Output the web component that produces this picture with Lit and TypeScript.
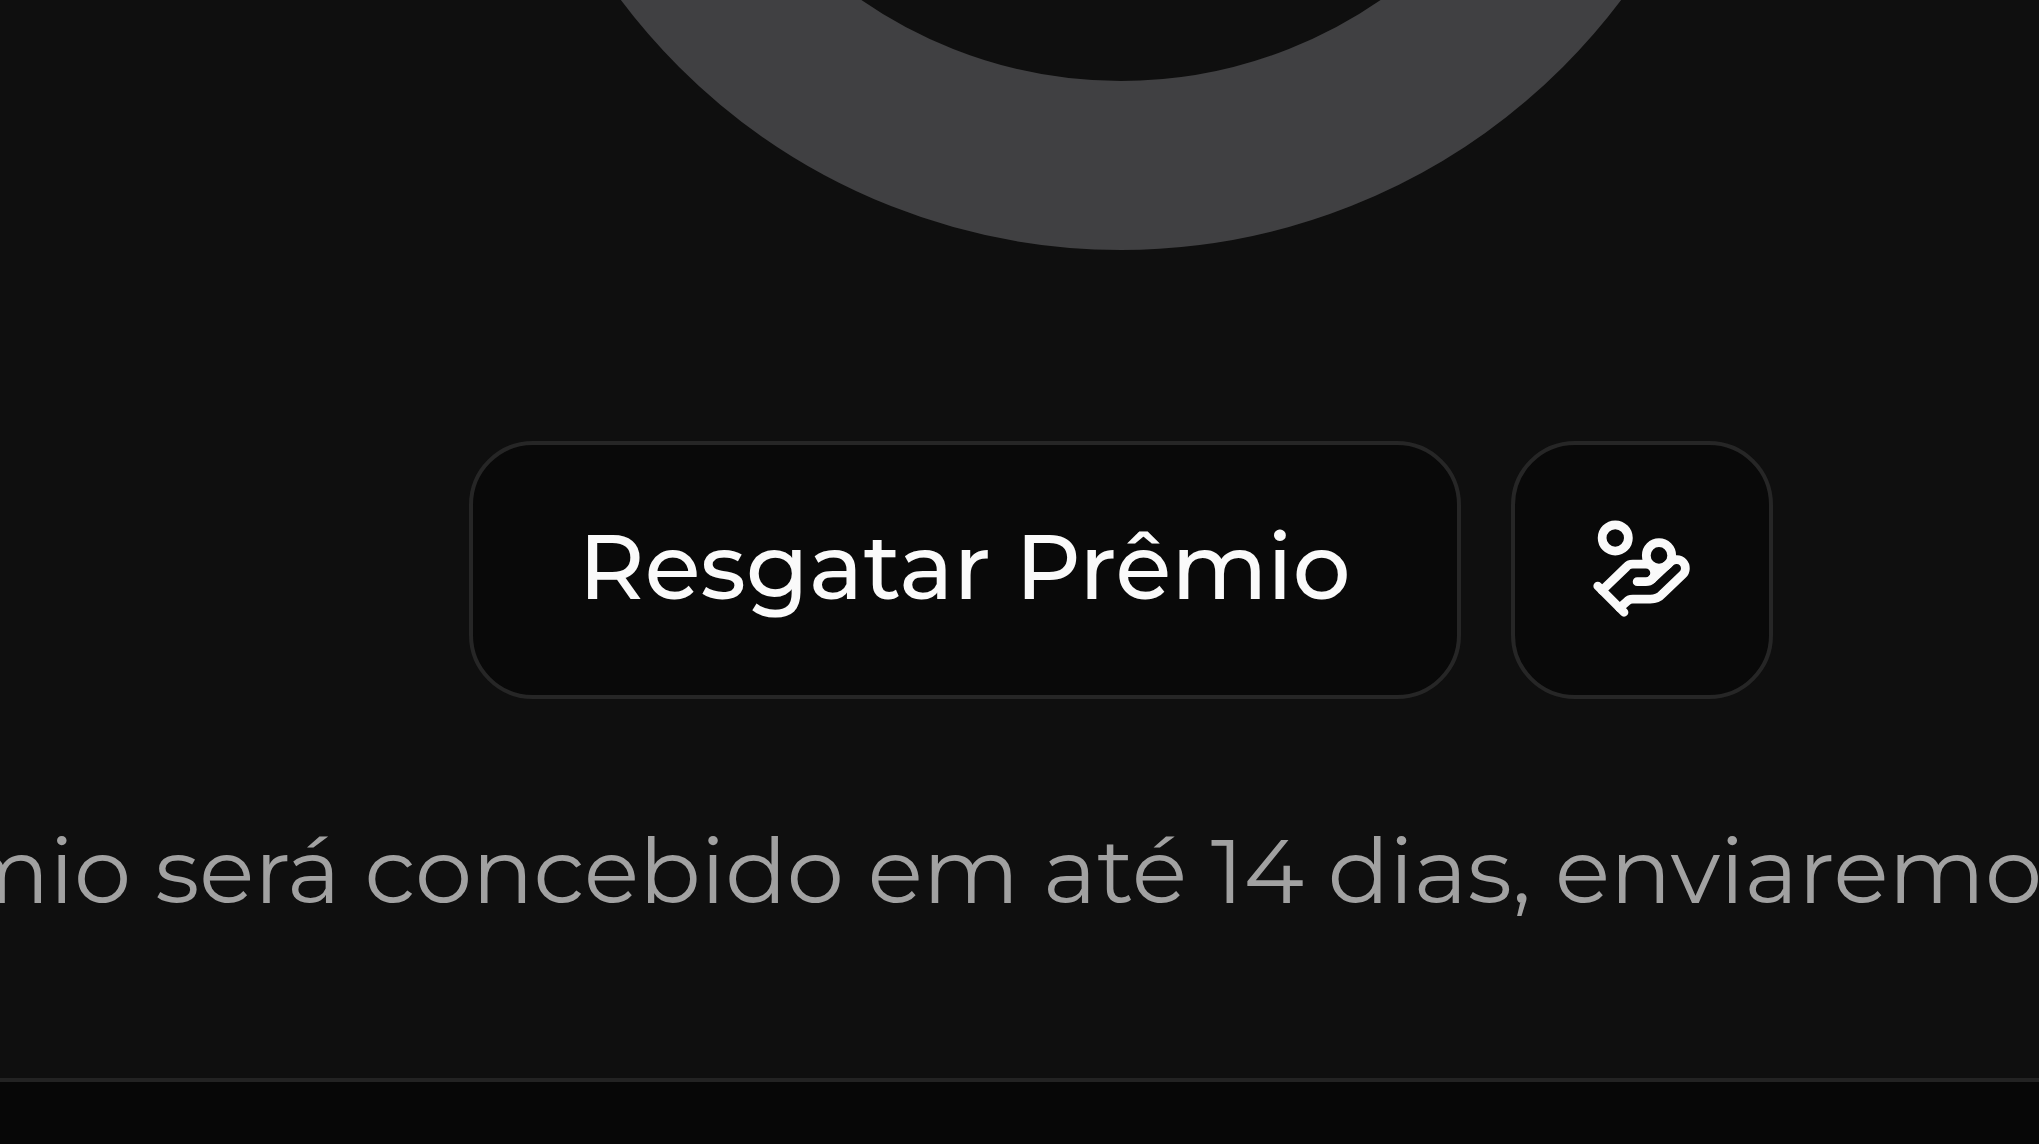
import { LitElement, html, css } from "lit";
import { customElement } from "lit/decorators.js";

@customElement("app-root")
export class AppRoot extends LitElement {
  static styles = css`
    :host {
      display: block;
      background: #070707;
      color: #fafafa;
      font-family: Montserrat, Inter, sans-serif;
      min-height: 100vh;
      overflow: hidden;
    }

    .card {
      display: flex;
      flex-direction: column;
      background: #0f0f0f;
      border-bottom: 4px solid #232323;
      padding-bottom: 137px;
    }

    .wheel {
      display: flex;
      justify-content: center;
      padding-left: 202px;
    }

    .ring {
      flex: none;
      width: 1250px;
      height: 250px;
    }

    .actions {
      display: flex;
      justify-content: center;
      gap: 50px;
      padding-left: 202px;
      margin-top: 191px;
    }

    .button {
      box-sizing: border-box;
      display: flex;
      align-items: center;
      justify-content: center;
      height: 258px;
      padding: 0 106px 6px;
      border: 4px solid #262626;
      border-radius: 64px;
      background: #090909;
      color: inherit;
      font: inherit;
      font-size: 91px;
      font-weight: 500;
      line-height: 128px;
      white-space: nowrap;
      cursor: pointer;
    }

    .square {
      width: 262px;
      padding: 0 0 4px;
    }

    .icon {
      display: block;
      width: 105px;
      height: 105px;
    }

    .note {
      display: flex;
      justify-content: center;
      margin: 102px 0 0;
      padding-right: 44px;
      color: #a1a1a1;
      font-size: 91px;
      font-weight: 400;
      line-height: 140px;
      white-space: nowrap;
    }
  `;

  render() {
    return html`
      <main class="card">
        <div class="wheel">
          <svg class="ring" viewBox="0 0 1250 250" aria-hidden="true">
            <circle cx="625" cy="-375" r="540.5" fill="none" stroke="#404042" stroke-width="169" />
          </svg>
        </div>
        <div class="actions">
          <button class="button" type="button">Resgatar Prêmio</button>
          <button class="button square" type="button" aria-label="Prêmio">
            <svg
              class="icon"
              viewBox="0 0 24 24"
              fill="none"
              stroke="currentColor"
              stroke-width="2"
              stroke-linecap="round"
              stroke-linejoin="round"
              aria-hidden="true"
            >
              <path d="M11 15h2a2 2 0 1 0 0-4h-3c-.6 0-1.1.2-1.4.6L3 17" />
              <path d="m7 21 1.6-1.4c.3-.4.8-.6 1.4-.6h4c1.1 0 2.1-.4 2.8-1.2l4.6-4.4a2 2 0 0 0-2.75-2.91l-4.2 3.9" />
              <path d="m2 16 6 6" />
              <circle cx="16" cy="9" r="2.9" />
              <circle cx="6" cy="5" r="3" />
            </svg>
          </button>
        </div>
        <p class="note"><span>mio será concebido em até 14 dias, enviaremo</span></p>
      </main>
    `;
  }
}
